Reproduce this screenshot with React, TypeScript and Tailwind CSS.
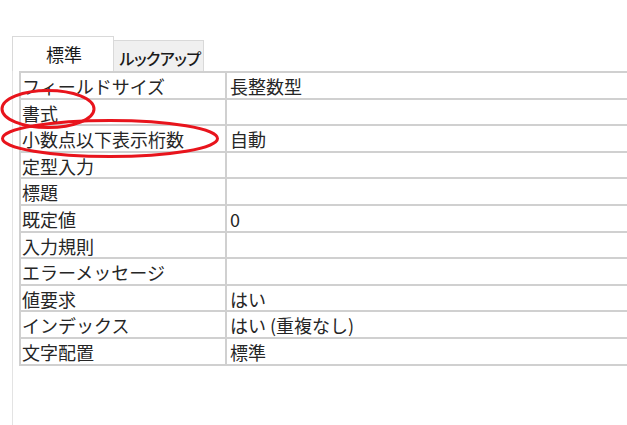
const rows: [string, string][] = [
  ["フィールドサイズ", "長整数型"],
  ["書式", ""],
  ["小数点以下表示桁数", "自動"],
  ["定型入力", ""],
  ["標題", ""],
  ["既定値", "0"],
  ["入力規則", ""],
  ["エラーメッセージ", ""],
  ["値要求", "はい"],
  ["インデックス", "はい (重複なし)"],
  ["文字配置", "標準"],
];

export default function App() {
  return (
    <div className="relative flex h-[425px] w-[627px] overflow-hidden bg-white font-['Noto_Sans_CJK_JP','Noto_Sans',sans-serif] text-[#262626]">
      {/* window edge */}
      <div className="ml-[2px] w-[1px] bg-[#a0a0a0]" />

      <div className="ml-[10px] mt-[36px] flex flex-1 flex-col">
        {/* tabs */}
        <div className="flex items-end">
          <div className="flex h-[35px] w-[102px] items-center justify-center border-x border-t border-[#d9d9d9] bg-white pl-[2px] pt-[1px] text-[18px] text-[#1a1a1a]">
            標準
          </div>
          <div className="flex h-[31px] w-[90px] items-center justify-center whitespace-nowrap border-r border-t border-[#d9d9d9] bg-[#f0f0f0] pl-[3px] pt-[4px] text-[16px] font-medium tracking-[-0.5px] text-[#1a1a1a] [font-feature-settings:'palt']">
            ルックアップ
          </div>
        </div>

        {/* panel */}
        <div className="flex-1 border-l border-[#e3e3e3] pl-[6px]">
          <div className="w-[620px] border-l-2 border-t-2 border-[#d0d0d0]">
            {rows.map(([label, value]) => (
              <div key={label} className="flex h-[26.6px] border-b-2 border-[#d0d0d0] text-[18px] leading-[25px]">
                <div className="w-[206px] border-r-2 border-[#d0d0d0] pl-[1px] pt-[1px] whitespace-nowrap">
                  {label}
                </div>
                <div className="flex-1 pl-[3px] pt-[1px] whitespace-nowrap">{value}</div>
              </div>
            ))}
          </div>
        </div>
      </div>

      {/* red annotation marks */}
      <svg className="pointer-events-none absolute left-0 top-0" width="627" height="425">
        <ellipse cx="48" cy="109" rx="46" ry="18.5" fill="none" stroke="#e8141c" strokeWidth="3" />
        <ellipse cx="110" cy="138.5" rx="107.5" ry="18" fill="none" stroke="#e8141c" strokeWidth="3" />
      </svg>
    </div>
  );
}
